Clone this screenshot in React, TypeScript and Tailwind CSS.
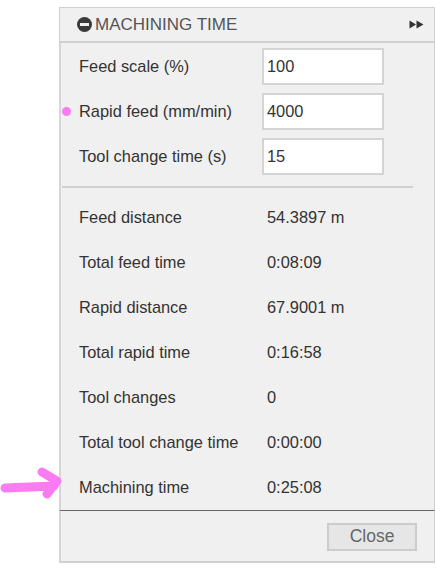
import React from "react";

const font = { fontFamily: '"Liberation Sans", Arial, sans-serif' };

const inputs = [
  { label: "Feed scale (%)", value: "100" },
  { label: "Rapid feed (mm/min)", value: "4000", marked: true },
  { label: "Tool change time (s)", value: "15" },
];

const results = [
  ["Feed distance", "54.3897 m"],
  ["Total feed time", "0:08:09"],
  ["Rapid distance", "67.9001 m"],
  ["Total rapid time", "0:16:58"],
  ["Tool changes", "0"],
  ["Total tool change time", "0:00:00"],
  ["Machining time", "0:25:08"],
];

function Arrow() {
  return (
    <svg className="absolute left-0 top-[464px]" width="64" height="36" viewBox="0 0 64 36">
      <g fill="none" stroke="#fb7cf2" strokeWidth="9" strokeLinecap="round" strokeLinejoin="round">
        <path d="M5 24 L54 22" />
        <path d="M42 8 L57 17 L47 30" />
      </g>
    </svg>
  );
}

function Expand() {
  return (
    <svg width="15" height="9" viewBox="0 0 15 9">
      <path d="M0.5 0.5 L7 4.5 L0.5 8.5 Z M7.5 0.5 L14.5 4.5 L7.5 8.5 Z" fill="#333" />
    </svg>
  );
}

export default function App() {
  return (
    <div className="relative w-[436px] h-[571px] bg-white text-[#333]" style={font}>
      <Arrow />
      <div className="ml-[59px] pt-[7px] w-[376px]">
        {/* panel header */}
        <div className="h-[36px] flex items-center bg-[#f0f0f0] border border-[#cfcfcf] border-b-2 pl-[17px] pr-[9px]">
          <span className="w-[15px] h-[15px] rounded-full bg-[#3a3a3a] flex items-center justify-center">
            <span className="w-[9px] h-[3px] bg-[#f0f0f0]" />
          </span>
          <span className="ml-[3px] text-[17px] text-[#555]">MACHINING TIME</span>
          <span className="ml-auto pr-[1px] flex items-center">
            <Expand />
          </span>
        </div>

        {/* settings and results */}
        <div className="bg-[#f0f0f0] border-l-2 border-l-[#d6d6d6] border-r border-r-[#cfcfcf]">
          <div className="pt-[5px] pb-[11px] flex flex-col gap-[8px]">
            {inputs.map((row) => (
              <div key={row.label} className="relative flex items-center h-[37px]">
                {row.marked && (
                  <span className="absolute left-[1px] top-[14px] w-[9px] h-[9px] rounded-full bg-[#fb7cf2]" />
                )}
                <span className="pl-[18px] w-[201px] text-[16.4px]">{row.label}</span>
                <div className="w-[122px] h-[37px] bg-white border-2 border-[#d4d4d4] flex items-center pl-[3px] text-[16.4px]">
                  {row.value}
                </div>
              </div>
            ))}
          </div>
          <div className="ml-[1px] w-[351px] h-[2px] bg-[#d0d0d0]" />
          <div className="pt-[7px]">
            {results.map(([label, value]) => (
              <div key={label} className="flex items-center h-[45px] text-[16.4px]">
                <span className="pl-[18px] w-[206px]">{label}</span>
                <span>{value}</span>
              </div>
            ))}
          </div>
        </div>

        {/* footer */}
        <div className="h-[53px] bg-[#f0f0f0] border-t border-t-[#666] border-l-2 border-l-[#d6d6d6] border-b-2 border-b-[#d0d0d0] border-r border-r-[#cfcfcf] flex items-start justify-end pt-[12px] pr-[17px]">
          <button className="w-[90px] h-[28px] bg-[#e6e6e6] border-2 border-[#cccccc] text-[17.5px] text-[#666] leading-none">
            Close
          </button>
        </div>
      </div>
    </div>
  );
}
